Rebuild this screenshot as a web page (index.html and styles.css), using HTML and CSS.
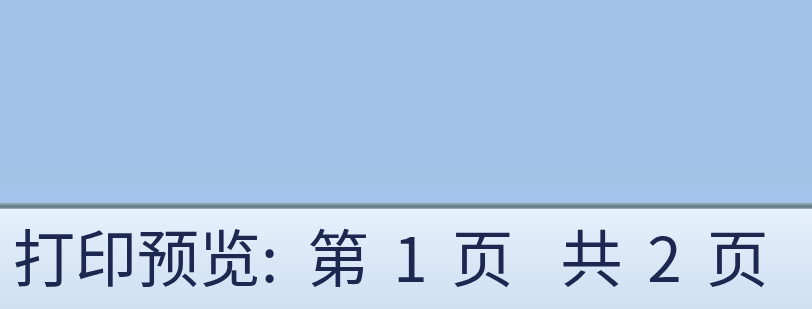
FILE: index.html
```html
<!DOCTYPE html>
<html lang="zh-CN">
<head>
    <meta charset="UTF-8">
    <title>打印预览</title>
    <link rel="stylesheet" href="styles.css">
</head>
<body>
    <div class="workspace"></div>
    <div class="divider"></div>
    <div class="status-bar">
        <span class="status-label">打印预览:</span>
        <span class="page-info">第 1 页</span>
        <span class="page-info">共 2 页</span>
    </div>
</body>
</html>
```

FILE: styles.css
```css
* {
    margin: 0;
    padding: 0;
    box-sizing: border-box;
}

html, body {
    height: 100%;
    overflow: hidden;
}

body {
    display: flex;
    flex-direction: column;
    background-color: #a3c2e8;
    font-family: "Noto Sans CJK SC", "DejaVu Sans", sans-serif;
}

.workspace {
    flex: 1;
    background: linear-gradient(to bottom, #a3c2e9 0%, #a2c2e8 75%, #a3c3e6 88%, #a4c4ee 96%, #a3c0e4 100%);
}

.divider {
    height: 6px;
    background: linear-gradient(to bottom, #93aebd 0%, #6c878e 45%, #5c767c 65%, #9fb6c2 100%);
}

.status-bar {
    height: 100px;
    display: flex;
    align-items: center;
    padding: 0 0 8px 13px;
    background: linear-gradient(to bottom, #e6f1fc 0%, #dce9f7 40%, #cfe0f3 100%);
    color: #1c2850;
    font-size: 62px;
    line-height: 1;
    word-spacing: 10px;
    white-space: pre;
}

.status-label {
    margin-right: 29px;
}

.page-info {
    margin-right: 47px;
}

.page-info:last-child {
    margin-right: 0;
    word-spacing: 11px;
}
```
